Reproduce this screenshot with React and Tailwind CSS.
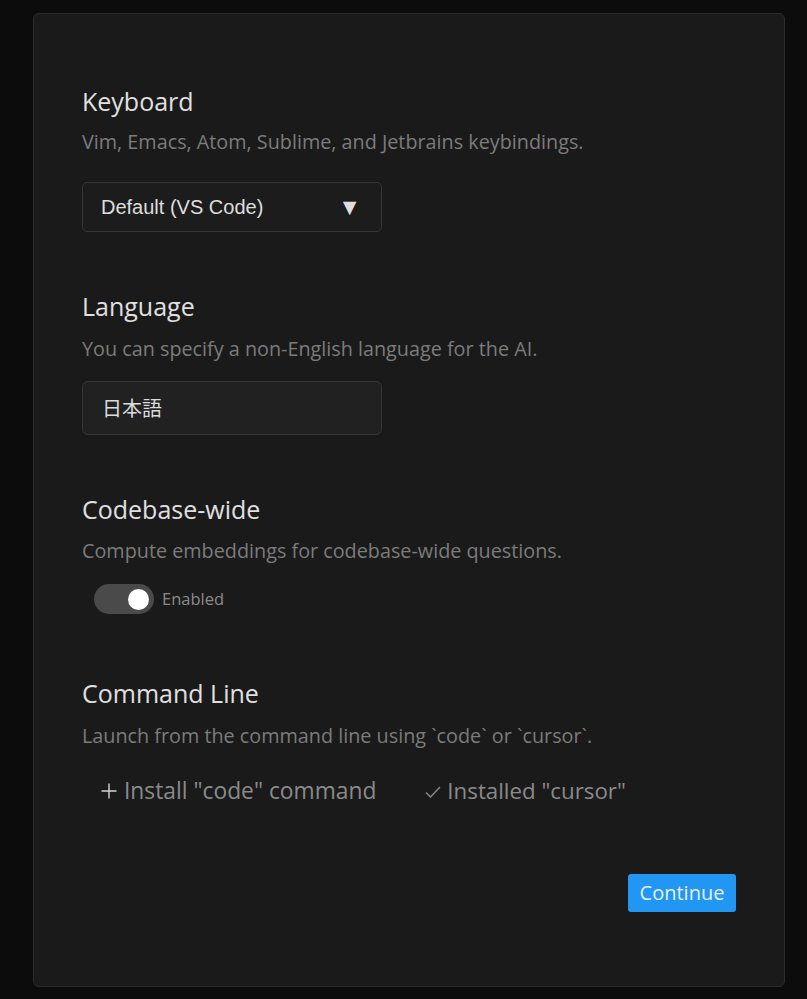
export default function App() {
  const font = { fontFamily: '"Open Sans", "Noto Sans", sans-serif' };
  return (
    <div className="w-[807px] h-[999px] bg-[#0c0c0c] pt-[13px] pl-[33px]" style={font}>
      <div className="w-[752px] h-[974px] bg-[#1a1a1a] border border-[#2c2c2c] rounded-[6px] pl-[48px] pr-[48px] pt-[71px] flex flex-col">
        <h2 className="text-[25px] leading-[32px] text-[#e0e0e0]">Keyboard</h2>
        <p className="mt-[13px] text-[19.8px] leading-[24px] text-[#7c7c7c] whitespace-nowrap">Vim, Emacs, Atom, Sublime, and Jetbrains keybindings.</p>
        <div className="mt-[28px] w-[300px] h-[50px] rounded-[5px] border border-[#353535] bg-[#1c1c1c] flex items-center justify-between pl-[18px] pr-[20px] text-[20px] text-[#dedede]" style={{ fontFamily: '"Liberation Sans", Arial, sans-serif' }}>
          <span>Default (VS Code)</span>
          <span className="text-[23px] leading-none">▼</span>
        </div>

        <h2 className="mt-[58px] text-[25px] leading-[32px] text-[#e0e0e0]">Language</h2>
        <p className="mt-[15px] text-[19.8px] leading-[24px] text-[#7c7c7c] whitespace-nowrap">You can specify a non-English language for the AI.</p>
        <div className="mt-[20px] w-[300px] h-[54px] rounded-[6px] border border-[#363636] bg-[#212121] flex items-center pl-[19px] text-[20px] text-[#dcdcdc]" style={{ fontFamily: '"Noto Sans CJK JP", sans-serif' }}>
          日本語
        </div>

        <h2 className="mt-[58px] text-[25px] leading-[32px] text-[#e0e0e0]">Codebase-wide</h2>
        <p className="mt-[14px] text-[19.8px] leading-[24px] text-[#7c7c7c] whitespace-nowrap">Compute embeddings for codebase-wide questions.</p>
        <div className="mt-[21px] flex items-center pl-[12px]">
          <div className="w-[60px] h-[30px] rounded-full bg-[#4a4a4a] flex items-center justify-end pr-[5px]">
            <div className="w-[21px] h-[21px] rounded-full bg-white" />
          </div>
          <span className="ml-[8px] text-[16.5px] text-[#8a8a8a]">Enabled</span>
        </div>

        <h2 className="mt-[63px] text-[25px] leading-[32px] text-[#e0e0e0]">Command Line</h2>
        <p className="mt-[15px] text-[19.8px] leading-[24px] text-[#7c7c7c] whitespace-nowrap">Launch from the command line using `code` or `cursor`.</p>
        <div className="mt-[28px] flex items-center pl-[19px] text-[22.8px] leading-[30px] text-[#8a8a8a]">
          <span className="flex items-center">
            <svg width="16" height="16" viewBox="0 0 16 16" className="mr-[7px]">
              <path d="M8 0.5V15.5M0.5 8H15.5" stroke="#d4d4d4" strokeWidth="1.4" fill="none" />
            </svg>
            <span>Install "code" command</span>
          </span>
          <span className="flex items-center ml-[49px]">
            <svg width="16" height="12" viewBox="0 0 16 12" className="mr-[6px] mt-[2px]">
              <path d="M1 6.5L5.5 11L15 1" stroke="#8a8a8a" strokeWidth="1.4" fill="none" />
            </svg>
            <span className="text-[22.3px]">Installed "cursor"</span>
          </span>
        </div>

        <div className="mt-[68px] flex justify-end">
          <button className="w-[108px] h-[38px] rounded-[3px] bg-[#2196f3] text-[20px] text-[#e8f0fa] flex items-center justify-center">Continue</button>
        </div>
      </div>
    </div>
  );
}
